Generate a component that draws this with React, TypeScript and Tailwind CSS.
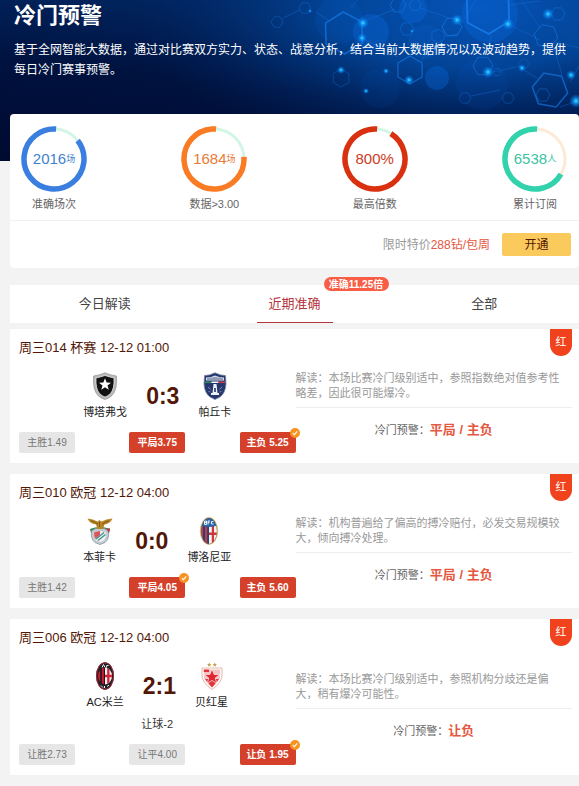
import type { ReactNode } from "react";

type Hex = { x: number; y: number; r: number; turn?: number; w?: number; o?: number };

const hexes: Hex[] = [
  { x: 344, y: 33, r: 21, turn: 28, w: 1.6, o: 0.6 },
  { x: 488, y: 10, r: 24, turn: 28, w: 1.8, o: 0.8 },
  { x: 410, y: 70, r: 14, turn: 30, w: 1.2, o: 0.6 },
  { x: 452, y: 27, r: 10, turn: 0, w: 1, o: 0.6 },
  { x: 483, y: 66, r: 10, turn: 0, w: 1, o: 0.5 },
  { x: 550, y: 90, r: 18, turn: 10, w: 1.5, o: 0.6 },
  { x: 546, y: 36, r: 12, turn: 10, w: 1, o: 0.5 },
  { x: 543, y: 95, r: 7, w: 1, o: 0.4 },
  { x: 341, y: 78, r: 9, turn: 30, w: 0.8, o: 0.4 },
  { x: 407, y: 29, r: 7, w: 0.8, o: 0.5 },
  { x: 398, y: 5, r: 8, w: 1, o: 0.5 },
  { x: 415, y: 5, r: 6, w: 0.8, o: 0.5 },
  { x: 438, y: 36, r: 7, turn: 30, w: 0.8, o: 0.5 },
  { x: 305, y: 8, r: 6, w: 0.8, o: 0.4 },
  { x: 277, y: 22, r: 6, w: 0.8, o: 0.4 },
  { x: 465, y: 98, r: 6, w: 0.8, o: 0.4 },
  { x: 508, y: 98, r: 6, w: 0.8, o: 0.4 },
  { x: 558, y: 14, r: 7, w: 0.8, o: 0.5 },
  { x: 497, y: 72, r: 4, w: 0.6, o: 0.5 },
  { x: 524, y: 64, r: 5, w: 0.6, o: 0.4 },
];

const glows = [
  [363, 23, 6], [362, 38, 5], [457, 20, 6], [508, 24, 6], [548, 14, 6], [409, 80, 5],
  [488, 72, 6], [341, 70, 4], [386, 71, 3], [366, 91, 3], [522, 68, 4], [571, 75, 5],
  [576, 101, 7], [412, 31, 2], [310, 11, 2],
];

const discs = [
  [371, 32, 18, 0.35], [413, 9, 14, 0.35], [437, 78, 12, 0.35], [490, 15, 28, 0.3],
  [425, 42, 17, 0.18], [339, 20, 24, 0.12], [482, 84, 26, 0.08], [380, 88, 20, 0.08],
];

const links = [
  "M316 12 328 20", "M351 8 362-6", "M363 22 395 9", "M362 38 398 57", "M421 62 433 42", "M462 23 476 0",
  "M508 24 540 40", "M510 5 540 1", "M520-2 540 28", "M493 72 521 66", "M554 48 562 75", "M570 82 579 66",
  "M283 18 300 10", "M420 8 449 18", "M445 36 458 34", "M560 107 578 101", "M524 70 537 78", "M471 96 500 90",
  "M556 42 579 48", "M492 35 484 56",
];

function hexPoints({ x, y, r, turn = 0 }: Hex) {
  return Array.from({ length: 6 }, (_, i) => {
    const a = ((i * 60 + turn) * Math.PI) / 180;
    return `${(x + r * Math.cos(a)).toFixed(1)},${(y + r * Math.sin(a)).toFixed(1)}`;
  }).join(" ");
}

function BannerArt() {
  return (
    <svg className="absolute inset-0 h-full w-full" viewBox="0 0 579 161" preserveAspectRatio="xMaxYMin slice" aria-hidden="true">
      <defs>
        <linearGradient id="base" x1="0" y1="1" x2="0.35" y2="0">
          <stop offset="0" stopColor="#000a30" />
          <stop offset="0.55" stopColor="#00123f" />
          <stop offset="1" stopColor="#012560" />
        </linearGradient>
        <radialGradient id="light" gradientUnits="userSpaceOnUse" cx="0" cy="0" r="1" gradientTransform="translate(475 8) scale(350 150)">
          <stop offset="0" stopColor="#0553b6" />
          <stop offset="0.4" stopColor="#03489e" stopOpacity="0.9" />
          <stop offset="1" stopColor="#012560" stopOpacity="0" />
        </radialGradient>
        <radialGradient id="glow">
          <stop offset="0" stopColor="#4fe0ff" />
          <stop offset="0.35" stopColor="#0da2ff" stopOpacity="0.8" />
          <stop offset="1" stopColor="#0a6fe8" stopOpacity="0" />
        </radialGradient>
      </defs>
      <rect width="579" height="161" fill="url(#base)" />
      <rect width="579" height="161" fill="url(#light)" />
      {discs.map(([x, y, r, o]) => (
        <circle key={`${x}-${y}`} cx={x} cy={y} r={r} fill="#0a6be0" opacity={o} />
      ))}
      <path d={links.join("")} stroke="#1673dd" strokeWidth="0.8" opacity="0.5" fill="none" />
      {hexes.map((h) => (
        <polygon key={`${h.x}-${h.y}`} points={hexPoints(h)} fill="none" stroke="#1a80ee" strokeWidth={h.w} opacity={h.o} />
      ))}
      {glows.map(([x, y, r]) => (
        <circle key={`${x}-${y}`} cx={x} cy={y} r={r} fill="url(#glow)" />
      ))}
    </svg>
  );
}

type Stat = { value: string; unit?: string; label: string; color: string; track: string; gap: number; text: string };

const stats: Stat[] = [
  { value: "2016", unit: "场", label: "准确场次", color: "#3a7fe0", track: "#d3f5e5", gap: 52, text: "text-[#3f7fd0]" },
  { value: "1684", unit: "场", label: "数据>3.00", color: "#f97b24", track: "#d3f5e5", gap: 86, text: "text-[#ea7a34]" },
  { value: "800%", label: "最高倍数", color: "#d9310f", track: "#d3f5e5", gap: 32, text: "text-[#cc3a22]" },
  { value: "6538", unit: "人", label: "累计订阅", color: "#31d2ac", track: "#fdead6", gap: 120, text: "text-[#3cc3a3]" },
];

function Ring({ stat }: { stat: Stat }) {
  return (
    <div className="flex w-[66px] flex-col items-center">
      <div className="grid h-[66px] w-[66px] place-items-center">
        <svg className="col-start-1 row-start-1 h-[66px] w-[66px]" viewBox="0 0 66 66" fill="none" aria-hidden="true">
          <circle cx="33" cy="33" r="30" stroke={stat.track} strokeWidth="3" />
          <circle
            cx="33"
            cy="33"
            r="30"
            stroke={stat.color}
            strokeWidth="5.5"
            pathLength="360"
            strokeDasharray={`${364 - stat.gap} ${stat.gap - 4}`}
            transform={`rotate(${stat.gap - 90} 33 33)`}
          />
        </svg>
        <p className={`col-start-1 row-start-1 flex items-center text-[15px] leading-4 ${stat.text}`}>
          {stat.value}
          {stat.unit && <span className="text-[9px]">{stat.unit}</span>}
        </p>
      </div>
      <p className="mt-1 whitespace-nowrap text-[11px] leading-4 text-[#666]">{stat.label}</p>
    </div>
  );
}

function Crest({ children }: { children: ReactNode }) {
  return (
    <svg className="h-7 w-7" viewBox="0 0 28 28" aria-hidden="true">
      {children}
    </svg>
  );
}

const STAR = "M0-5 1.3-1.6 4.8-1.5 2 .7 3 4.1 0 2.1-3 4.1-2 .7-4.8-1.5-1.3-1.6Z";

const botafogo = (
  <Crest>
    <path d="M14 .8Q19 3 25.500 4 26.500 18 21 23.500 18 26.500 14 27.500 10 26.500 7 23.500 1.500 18 2.500 4 9 3 14 .8Z" fill="#b9b9b9" stroke="#8a8a8a" strokeWidth=".6" />
    <path d="M14 3.500Q18.500 5 23 6 23.500 17 19.500 21.500 17 24 14 25 11 24 8.500 21.500 4.500 17 5 6 9.500 5 14 3.500Z" fill="#111" stroke="#f0f0f0" strokeWidth=".7" />
    <path d={STAR} transform="translate(14 12.500) scale(1.250)" fill="#fff" />
  </Crest>
);

const pachuca = (
  <Crest>
    <path d="M3.500 3.500Q9 3.500 14 .800 19 3.500 24.500 3.500L25 12Q24.500 21 19 25L14 27.500 9 25Q3.500 21 3 12Z" fill="#26376d" stroke="#7985a8" strokeWidth=".8" />
    <path d="M5 5.500Q10 5.500 14 3.500 18 5.500 23 5.500V8.500H5Z" fill="#d9deea" />
    <path d="M7 6V8M9 5.500V8M11 5.500V8M13 5V8M15 5V8M17 5.500V8M19 5.500V8M21 6V8" stroke="#26376d" strokeWidth=".8" />
    <path d="M4 9.500H10.500V11H4Z" fill="#2c8f5d" />
    <path d="M10.500 9.500H17.500V11H10.500Z" fill="#fff" />
    <path d="M17.500 9.500H24V11H17.500Z" fill="#d23a44" />
    <path d="M12.500 12H15.500L16.500 21H18V23H10V21H11.500Z" fill="#eef1f7" />
    <path d="M13 16H15V20H13Z" fill="#4b5b8c" />
    <path d="M7 15 9.500 17.500M21 15 18.500 17.500M7.500 19.500 9.500 20M20.500 19.500 18.500 20" stroke="#7f8cb8" strokeWidth="1" />
  </Crest>
);

const benfica = (
  <Crest>
    <path d="M4 12Q14 8 24 12L23 16Q14 10 5 16Z" fill="#31834f" />
    <path d="M14 11Q19.500 11 22.500 14 23.500 22 19 25.500L14 27.500 9 25.500Q4.500 22 5.500 14 8.500 11 14 11Z" fill="#c3cad1" stroke="#8995a1" strokeWidth=".8" />
    <path d="M8 15.500Q14 12.500 20 15.500 20.500 21 17.500 23.500L14 25 10.500 23.500Q7.500 21 8 15.500Z" fill="#f1f1f1" />
    <path d="M8 15.500Q11 14 14 14V20L9.500 22.500Q7.800 19.500 8 15.500Z" fill="#d9575b" />
    <path d="M9 22 18.500 14.500 20 16.500 11 24Z" fill="#e8ecef" />
    <path d="M10 22 18 15.500M12 23.500 19.500 17.500" stroke="#3f8f86" strokeWidth="1.200" />
    <path d="M20.500 12 24 11 23 16Z" fill="#c9363d" />
    <path d="M1.500 1.500Q7 2 11.500 4.500L13.500 3 15.500 4.500Q20 2 26.500 1.500 24.500 6.500 18.500 7.500L17 12H11.500L10 7.500Q3.500 6.500 1.500 1.500Z" fill="#b98524" />
    <path d="M5 3.800Q9 5 12 7.200M23 3.800Q19 5 16 7.200M13.500 5V10" stroke="#705013" strokeWidth=".8" fill="none" />
  </Crest>
);

const bologna = (
  <Crest>
    <defs>
      <clipPath id="bolognaOval"><ellipse cx="14" cy="14" rx="8" ry="13" /></clipPath>
    </defs>
    <ellipse cx="14" cy="14" rx="9.300" ry="13.900" fill="#ead4a0" />
    <g clipPath="url(#bolognaOval)">
      <path d="M5 0H23V28H5Z" fill="#263f79" />
      <path d="M5 9H8V28H5ZM10 9H12.200V28H10Z" fill="#c13b45" />
      <path d="M14 9H23V28H14Z" fill="#f5f1ef" />
      <path d="M16.800 9H19V28H16.800ZM14 15.500H23V18H14Z" fill="#cf333c" />
      <path d="M5 0H23V8Q14 12 5 8Z" fill="#2a63a8" />
      <path d="M9.500 4V7.500H11.500V4ZM9.500 5.700H11.500M13 7.500V4H15M13 5.700H14.500M18.500 4.500H16.500V7H18.500" fill="none" stroke="#fff" strokeWidth=".9" />
    </g>
    <ellipse cx="14" cy="14" rx="8.300" ry="13.200" fill="none" stroke="#9b7c45" strokeWidth=".5" />
  </Crest>
);

const milan = (
  <Crest>
    <defs>
      <clipPath id="milanOval"><ellipse cx="14" cy="14" rx="7" ry="8.500" /></clipPath>
    </defs>
    <ellipse cx="14" cy="14" rx="9" ry="13.700" fill="#202024" />
    <ellipse cx="14" cy="14" rx="8.500" ry="13.200" fill="none" stroke="#b02a3b" strokeWidth=".9" />
    <path d="M11 5.500 12.500 2.500 14 5.500M17.500 3.500Q15 2.500 15.500 5.500M10 23.500 12 25.500M13.500 24V26M16 24.500 18 23" stroke="#f2f2f2" strokeWidth="1" fill="none" />
    <g clipPath="url(#milanOval)">
      <path d="M6 4H14V24H6Z" fill="#151518" />
      <path d="M7 4H9.300V24H7ZM10.800 4H12.900V24H10.800Z" fill="#c51e35" />
      <path d="M14 4H22V24H14Z" fill="#f7eeee" />
      <path d="M16.200 4H18.500V24H16.200ZM14 12.800H22V15.200H14Z" fill="#d02238" />
    </g>
  </Crest>
);

const redStar = (
  <Crest>
    <path d={STAR} transform="translate(11.200 2.700) scale(.480)" fill="#c99c4d" />
    <path d={STAR} transform="translate(16.800 2.700) scale(.480)" fill="#c99c4d" />
    <path d="M4 6H24V14Q23.500 21 14 27.500 4.500 21 4 14Z" fill="#fff" stroke="#e2b0a0" strokeWidth=".9" />
    <path d="M5.800 7.500H22.200V14Q21.500 20 14 25.500 6.500 20 5.800 14Z" fill="#f4c3c3" />
    <path d="M5.800 7.500H11V10H5.800ZM7 17H21L14 25.500Z" fill="#e2353d" />
    <path d={STAR} transform="translate(14 15) scale(1.600)" fill="#e02630" stroke="#fff" strokeWidth=".4" />
  </Crest>
);

type Odd = { label: string; pick?: boolean; hit?: boolean };
type Match = {
  title: string;
  home: string;
  away: string;
  homeCrest: ReactNode;
  awayCrest: ReactNode;
  score: string;
  handicap?: string;
  odds: Odd[];
  note: string;
  warning: string;
};

const matches: Match[] = [
  {
    title: "周三014 杯赛 12-12 01:00",
    home: "博塔弗戈",
    away: "帕丘卡",
    homeCrest: botafogo,
    awayCrest: pachuca,
    score: "0:3",
    odds: [{ label: "主胜1.49" }, { label: "平局3.75", pick: true }, { label: "主负 5.25", pick: true, hit: true }],
    note: "解读：本场比赛冷门级别适中，参照指数绝对值参考性略差，因此很可能爆冷。",
    warning: "平局 / 主负",
  },
  {
    title: "周三010 欧冠 12-12 04:00",
    home: "本菲卡",
    away: "博洛尼亚",
    homeCrest: benfica,
    awayCrest: bologna,
    score: "0:0",
    odds: [{ label: "主胜1.42" }, { label: "平局4.05", pick: true, hit: true }, { label: "主负 5.60", pick: true }],
    note: "解读：机构普遍给了偏高的搏冷赔付，必发交易规模较大，倾向搏冷处理。",
    warning: "平局 / 主负",
  },
  {
    title: "周三006 欧冠 12-12 04:00",
    home: "AC米兰",
    away: "贝红星",
    homeCrest: milan,
    awayCrest: redStar,
    score: "2:1",
    handicap: "让球-2",
    odds: [{ label: "让胜2.73" }, { label: "让平4.00" }, { label: "让负 1.95", pick: true, hit: true }],
    note: "解读：本场比赛冷门级别适中，参照机构分歧还是偏大，稍有爆冷可能性。",
    warning: "让负",
  },
];

function Team({ crest, name }: { crest: ReactNode; name: string }) {
  return (
    <div className="flex flex-col items-center gap-1">
      {crest}
      <span className="whitespace-nowrap text-[11px] leading-4 text-[#222]">{name}</span>
    </div>
  );
}

function OddBox({ odd }: { odd: Odd }) {
  const tone = odd.pick ? "bg-[#d5402b] font-bold text-white" : "bg-[#e6e6e6] text-[#777]";
  return (
    <li className={`relative flex h-[21px] w-14 items-center justify-center whitespace-nowrap rounded-xs text-[10px] ${tone}`}>
      {odd.label}
      {odd.hit && (
        <svg className="absolute -right-1 -top-1 h-2.5 w-2.5" viewBox="0 0 10 10" aria-hidden="true">
          <circle cx="5" cy="5" r="5" fill="#f7931e" />
          <path d="M2.800 5.200 4.400 6.700 7.200 3.300" fill="none" stroke="#fff" strokeWidth="1.100" />
        </svg>
      )}
    </li>
  );
}

function MatchCard({ match }: { match: Match }) {
  return (
    <article className="flex flex-col bg-white pb-2.5 pl-[9px] pr-[7px]">
      <header className="flex items-start justify-between">
        <h2 className="text-[13px] leading-[37px] text-[#521706]">{match.title}</h2>
        <span className="-mb-2 flex h-[27px] w-[22px] items-center justify-center rounded-b-full bg-[#f1421e] text-[11px] text-white">红</span>
      </header>
      <div className="flex">
        <div className="flex flex-1 flex-col pt-1.5">
          <div className="flex items-center justify-center gap-[19px]">
            <Team crest={match.homeCrest} name={match.home} />
            <strong className="text-[23px] leading-7 text-[#521706]">{match.score}</strong>
            <Team crest={match.awayCrest} name={match.away} />
          </div>
          {match.handicap && <p className="mt-1.5 text-center text-[11px] leading-4 text-[#333]">{match.handicap}</p>}
          <ul className="mt-3 flex justify-between">
            {match.odds.map((odd) => (
              <OddBox key={odd.label} odd={odd} />
            ))}
          </ul>
        </div>
        <div className="flex flex-1 flex-col justify-center pb-1.5">
          <p className="border-b border-[#eee] pb-1.5 pr-2 text-[11px] leading-[15px] text-[#999]">{match.note}</p>
          <p className="mt-2.5 flex items-center justify-center text-[11px] leading-6 text-[#666]">
            冷门预警：<strong className="text-[13px] text-[#e5573f]">{match.warning}</strong>
          </p>
        </div>
      </div>
    </article>
  );
}

const tabs = [
  { label: "今日解读" },
  { label: "近期准确", active: true, badge: "准确11.25倍" },
  { label: "全部" },
];

export default function App() {
  return (
    <div className="min-h-screen bg-[#f3f3f3] pb-2.5 font-['Liberation_Sans','Noto_Sans_CJK_SC',sans-serif]" lang="zh-CN">
      <header className="relative overflow-hidden bg-[#000a30] pb-[81px] pl-3.5 text-white">
        <BannerArt />
        <h1 className="relative text-[22px] font-bold leading-8">冷门预警</h1>
        <p className="relative mt-2 pr-0.5 text-[12px] leading-5">
          基于全网智能大数据，通过对比赛双方实力、状态、战意分析，结合当前大数据情况以及波动趋势，提供每日冷门赛事预警。
        </p>
      </header>

      <main className="relative -mt-[47px] flex flex-col pl-2.5">
        <section className="rounded-sm bg-white">
          <div className="flex justify-between border-b border-[#f0f0f0] px-[11px] pb-2 pt-3">
            {stats.map((stat) => (
              <Ring key={stat.label} stat={stat} />
            ))}
          </div>
          <div className="flex h-[47px] items-center justify-end gap-3 pr-2">
            <p className="text-[12px] text-[#999]">
              限时特价<span className="text-[#e5573f]">288钻/包周</span>
            </p>
            <button type="button" className="h-[23px] w-[69px] rounded-xs bg-[#fbca5c] text-[12px] text-[#521706]">开通</button>
          </div>
        </section>

        <nav className="mt-[17px] flex bg-white">
          {tabs.map((tab) => (
            <div key={tab.label} className="relative flex flex-1 justify-center">
              <button
                type="button"
                aria-pressed={Boolean(tab.active)}
                className={`h-[38px] w-[76px] border-b text-[13px] ${tab.active ? "border-[#b5333b] text-[#b5333b]" : "border-transparent text-[#444]"}`}
              >
                {tab.label}
              </button>
              {tab.badge && (
                <span className="absolute -top-2 left-1/2 ml-[29px] flex h-3.5 w-[65px] items-center justify-center whitespace-nowrap rounded-full bg-[#f95d45] text-[10px] font-bold text-white">
                  {tab.badge}
                </span>
              )}
            </div>
          ))}
        </nav>

        <div className="mt-1.5 flex flex-col gap-[11px]">
          {matches.map((match) => (
            <MatchCard key={match.title} match={match} />
          ))}
        </div>
      </main>
    </div>
  );
}
